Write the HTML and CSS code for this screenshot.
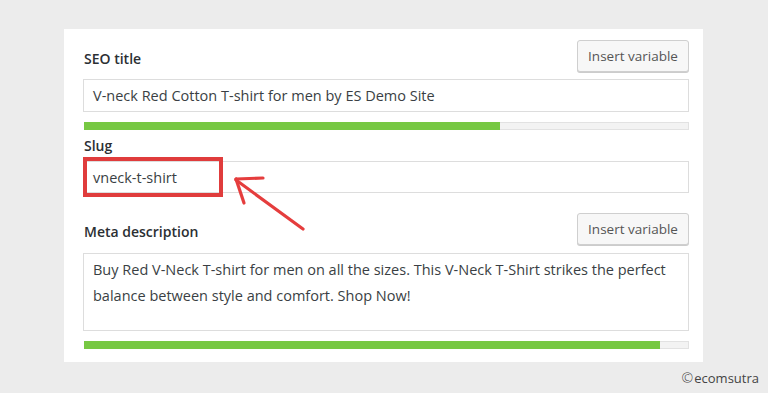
FILE: index.html
```html
<!DOCTYPE html>
<html>
<head>
<meta charset="utf-8">
<link rel="stylesheet" href="styles.css">
</head>
<body>
<div class="page">
  <div class="panel">
    <div class="field-head">
      <span class="label head-label">SEO title</span>
      <button class="btn">Insert variable</button>
    </div>
    <div class="input title-input">V-neck Red Cotton T-shirt for men by ES Demo Site</div>
    <div class="progress"><div class="bar" style="width:69%"></div></div>

    <div class="label slug-label">Slug</div>
    <div class="slug-wrap">
      <div class="input slug-input">vneck-t-shirt</div>
      <div class="highlight"></div>
    </div>

    <div class="field-head meta-head">
      <span class="label head-label">Meta description</span>
      <button class="btn">Insert variable</button>
    </div>
    <div class="input textarea">Buy Red V-Neck T-shirt for men on all the sizes. This V-Neck T-Shirt strikes the perfect balance between style and comfort. Shop Now!</div>
    <div class="progress"><div class="bar" style="width:95.5%"></div></div>
  </div>
  <div class="footer"><span class="copy">©</span>ecomsutra</div>
  <svg class="arrow" width="768" height="393" viewBox="0 0 768 393">
    <g stroke="#e53d3d" stroke-width="3.2" stroke-linecap="round" fill="none">
      <line x1="303" y1="229" x2="236" y2="180"/>
      <line x1="236" y1="179" x2="263" y2="178"/>
      <line x1="236" y1="179" x2="244" y2="203"/>
    </g>
  </svg>
</div>
</body>
</html>
```
FILE: styles.css
```css
html, body {
  margin: 0;
  padding: 0;
}
body {
  background: #ececec;
  width: 768px;
  height: 393px;
  overflow: hidden;
  font-family: "Open Sans", "Noto Sans", sans-serif;
  color: #32373c;
}
.page {
  position: relative;
  width: 768px;
  height: 393px;
  padding: 29px 0 0 64px;
  box-sizing: border-box;
}
.panel {
  width: 639px;
  height: 333px;
  background: #fff;
  box-sizing: border-box;
  padding: 11px 14px 0 19px;
  display: flex;
  flex-direction: column;
}
.field-head {
  display: flex;
  justify-content: space-between;
  align-items: center;
  height: 32px;
}
.label {
  font-size: 14px;
  font-weight: 600;
  color: #2b2f33;
  line-height: 20px;
  padding-left: 1px;
}
.head-label {
  padding-top: 6px;
}
.btn {
  height: 32px;
  width: 112px;
  padding: 0;
  background: #f7f7f7;
  border: 1px solid #cfcfcf;
  border-radius: 3px;
  box-shadow: 0 1px 0 #cccccc;
  font-family: "Open Sans", "Noto Sans", sans-serif;
  font-size: 13.5px;
  color: #555;
}
.input {
  border: 1px solid #ddd;
  box-sizing: border-box;
  font-size: 14.5px;
  color: #3a3f44;
  padding: 0 9px;
  display: flex;
  align-items: center;
}
.title-input {
  height: 33px;
  margin-top: 7px;
}
.progress {
  height: 8px;
  margin-top: 10px;
  background: #f3f3f3;
  border: 1px solid #e2e2e2;
  box-sizing: border-box;
  margin-left: 1px;
}
.bar {
  height: 8px;
  margin: -1px 0 0 -1px;
  background: #77c843;
}
.slug-label {
  margin-top: 6px;
}
.slug-wrap {
  position: relative;
  margin-top: 5px;
}
.slug-input {
  height: 32px;
}
.highlight {
  position: absolute;
  left: 0;
  top: -4px;
  width: 140px;
  height: 40px;
  border: 4px solid #e03c3c;
  box-sizing: border-box;
}
.meta-head {
  margin-top: 20px;
}
.textarea {
  height: 78px;
  margin-top: 8px;
  align-items: flex-start;
  padding-top: 3px;
  line-height: 26px;
}
.textarea + .progress {
  margin-top: 10px;
}
.footer {
  display: flex;
  justify-content: flex-end;
  padding-right: 9px;
  margin-top: 8px;
  font-size: 13px;
  line-height: 16px;
  color: #444;
}
.copy {
  font-size: 14px;
  font-weight: 300;
  margin-right: 1px;
}
.arrow {
  position: absolute;
  left: 0;
  top: 0;
  pointer-events: none;
}
```
